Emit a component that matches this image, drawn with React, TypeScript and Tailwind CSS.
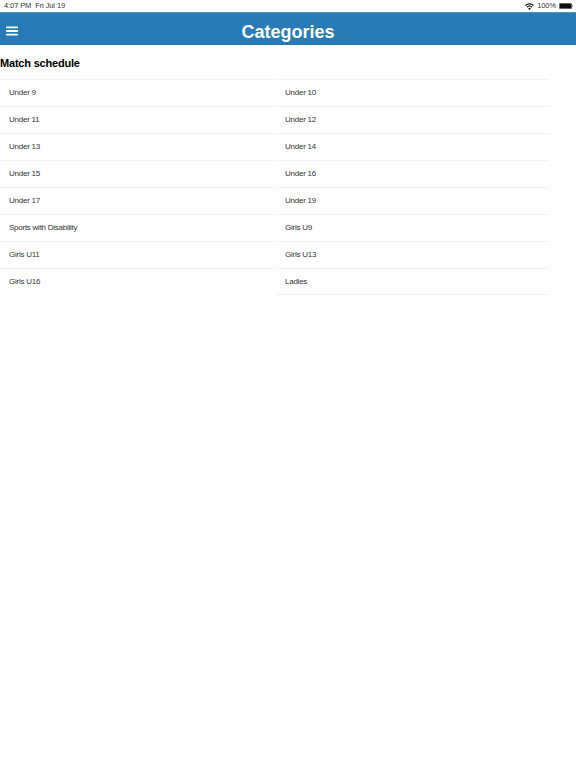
const categories = [
  'Under 9',
  'Under 10',
  'Under 11',
  'Under 12',
  'Under 13',
  'Under 14',
  'Under 15',
  'Under 16',
  'Under 17',
  'Under 19',
  'Sports with Disability',
  'Girls U9',
  'Girls U11',
  'Girls U13',
  'Girls U16',
  'Ladies',
]

function StatusBar() {
  return (
    <div className="flex h-3 items-center justify-between pl-1 pr-[3px] text-[7.5px] tracking-[-0.1px] text-[#333]">
      <span>4:07 PM &nbsp;Fri Jul 19</span>
      <div className="flex items-center gap-[3px]">
        <svg width="9" height="7" viewBox="0 0 16 12" fill="#111">
          <path d="M8 12 5.6 9.4a3.4 3.4 0 0 1 4.8 0ZM4.3 8 2.9 6.5a7.3 7.3 0 0 1 10.2 0L11.7 8a5.3 5.3 0 0 0-7.4 0ZM1.6 5.2 0 3.6a11.4 11.4 0 0 1 16 0l-1.6 1.6a9.2 9.2 0 0 0-12.8 0Z" />
        </svg>
        <span>100%</span>
        <div className="flex items-center">
          <div className="h-[6px] w-[13px] rounded-[1px] border-[0.5px] border-[#666] bg-[#111]" />
          <div className="h-[2px] w-px bg-[#999]" />
        </div>
      </div>
    </div>
  )
}

export default function App() {
  return (
    <div className="min-h-[768px] bg-white font-['Liberation_Sans',Arial,sans-serif]">
      <StatusBar />
      <header className="flex h-[33px] items-center border-t border-[#4a94c6] bg-[#277cb8] pt-[3px] pl-[6px]">
        <svg width="12" height="10" viewBox="0 0 12 10" fill="#fff">
          <rect width="12" height="1.8" y="0.4" rx="0.5" />
          <rect width="12" height="1.8" y="4.1" rx="0.5" />
          <rect width="12" height="1.8" y="7.8" rx="0.5" />
        </svg>
        <h1 className="flex-1 pt-[3px] pr-[18px] text-center text-[18px] leading-[24px] font-bold text-white">Categories</h1>
      </header>
      <h2 className="pt-[12px] pb-[9px] text-[11px] leading-[13px] font-bold tracking-[-0.2px] text-black">Match schedule</h2>
      <div className="grid w-[549px] grid-cols-2 gap-x-[3px]">
        {categories.map((name, i) => (
          <div
            key={name}
            className={`flex items-center border-t border-[#f1f1f1] pl-[9px] text-[8px] tracking-[-0.25px] text-[#333] ${
              i === categories.length - 1 ? 'h-[27px] border-b' : 'h-[27px]'
            }`}
          >
            {name}
          </div>
        ))}
      </div>
    </div>
  )
}
